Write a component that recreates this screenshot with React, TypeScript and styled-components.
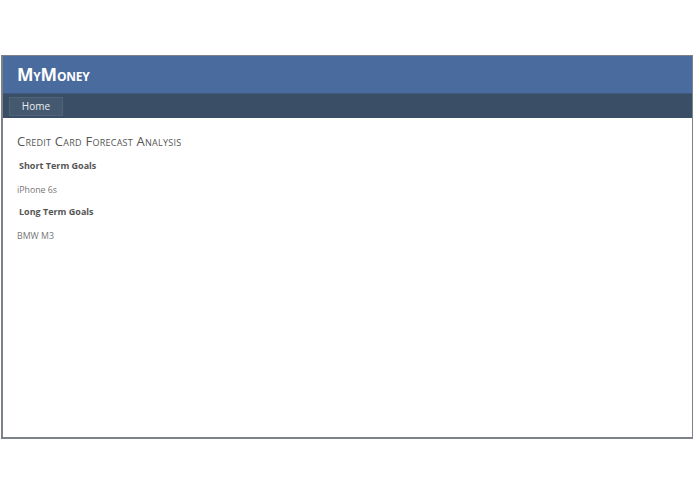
import React from "react";
import styled, { createGlobalStyle } from "styled-components";

const Global = createGlobalStyle`
  html, body { margin: 0; padding: 0; background: #ffffff; }
  body { font-family: "Open Sans", "Noto Sans", sans-serif; }
`;

const Page = styled.div`
  width: 695px;
  height: 494px;
  padding-top: 55px;
  padding-left: 1px;
  box-sizing: border-box;
`;

const Frame = styled.div`
  width: 692px;
  height: 384px;
  box-sizing: border-box;
  border: 1px solid #7d828a;
  border-left-width: 2px;
  border-bottom-width: 2px;
  display: flex;
  flex-direction: column;
  background: #fff;
`;

const Header = styled.header`
  height: 37px;
  background: #4a6b9e;
  display: flex;
  align-items: center;
  padding-left: 14px;
  border-bottom: 1px solid #3f5a80;
`;

const Brand = styled.div`
  color: #ffffff;
  font-family: "Open Sans", sans-serif;
  font-weight: 700;
  font-size: 17.5px;
  font-variant: small-caps;
  letter-spacing: -0.2px;
  line-height: 1;
  margin-top: 1px;
`;

const Nav = styled.nav`
  height: 24px;
  background: #3a4f66;
  display: flex;
  align-items: center;
  padding-left: 6px;
`;

const Tab = styled.div`
  height: 19px;
  width: 54px;
  box-sizing: border-box;
  background: #44596f;
  border: 1px solid #506478;
  color: #e8edf2;
  font-size: 10px;
  display: flex;
  align-items: center;
  justify-content: center;
`;

const Content = styled.main`
  padding: 14px 15px 0 14px;
  display: flex;
  flex-direction: column;
`;

const Title = styled.h1`
  margin: 0;
  font-size: 13px;
  font-weight: 400;
  font-variant: small-caps;
  color: #555555;
  letter-spacing: 0.25px;
  line-height: 18px;
`;

const Goal = styled.h2<{ $gap: number }>`
  margin: ${(p) => p.$gap}px 0 0 2px;
  font-size: 9px;
  font-weight: 700;
  color: #555555;
  line-height: 14px;
`;

const Item = styled.p`
  margin: 10px 0 0 0;
  font-size: 8.8px;
  color: #777777;
  line-height: 14px;
`;

export default function App() {
  return (
    <Page>
      <Global />
      <Frame>
        <Header>
          <Brand>MyMoney</Brand>
        </Header>
        <Nav>
          <Tab>Home</Tab>
        </Nav>
        <Content>
          <Title>Credit Card Forecast Analysis</Title>
          <Goal $gap={9}>Short Term Goals</Goal>
          <Item>iPhone 6s</Item>
          <Goal $gap={8}>Long Term Goals</Goal>
          <Item>BMW M3</Item>
        </Content>
      </Frame>
    </Page>
  );
}
